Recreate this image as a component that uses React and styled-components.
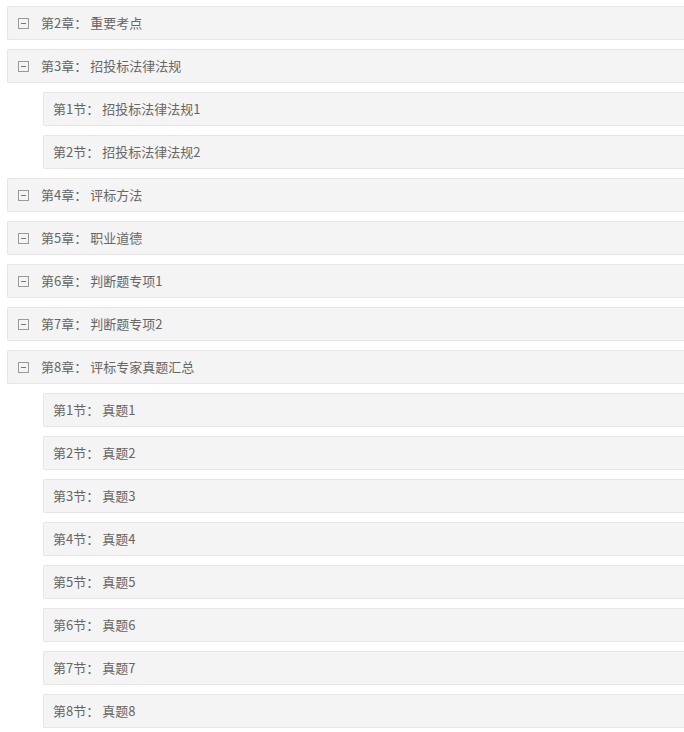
import React from "react"
import styled, { createGlobalStyle } from "styled-components"

const Global = createGlobalStyle`
  html, body {
    margin: 0;
    padding: 0;
    background: #fff;
  }
  body {
    font-family: "Microsoft YaHei", "Noto Sans CJK SC", "Noto Sans", sans-serif;
  }
`

const List = styled.div`
  display: flex;
  flex-direction: column;
  gap: 9px;
  padding: 6px 0 0 7px;
`

const Row = styled.div`
  display: flex;
  align-items: center;
  height: 32px;
  box-sizing: border-box;
  height: 34px;
  margin-left: ${props => (props.sub ? "36px" : "0")};
  padding: 0 0 2px ${props => (props.sub ? "9px" : "10px")};
  background: #f4f4f4;
  border: 1px solid #e6e6e6;
  border-right: none;
  border-radius: 2px 0 0 2px;
  color: #666;
  font-size: 13px;
  line-height: 1;
  white-space: pre;
`

const Toggle = styled.span`
  display: inline-flex;
  align-items: center;
  justify-content: center;
  width: 9px;
  height: 9px;
  margin-top: 2px;
  border: 1px solid #999;
  margin-right: 12px;
  &::after {
    content: "";
    width: 5px;
    height: 1px;
    background: #777;
  }
`

const data = [
  { label: "第2章：", title: "重要考点" },
  { label: "第3章：", title: "招投标法律法规" },
  { label: "第1节：", title: "招投标法律法规1", sub: true },
  { label: "第2节：", title: "招投标法律法规2", sub: true },
  { label: "第4章：", title: "评标方法" },
  { label: "第5章：", title: "职业道德" },
  { label: "第6章：", title: "判断题专项1" },
  { label: "第7章：", title: "判断题专项2" },
  { label: "第8章：", title: "评标专家真题汇总" },
  ...[1, 2, 3, 4, 5, 6, 7, 8].map(n => ({
    label: `第${n}节：`,
    title: `真题${n}`,
    sub: true,
  })),
]

const App = () => (
  <>
    <Global />
    <List>
      {data.map((item, i) => (
        <Row key={i} sub={item.sub}>
          {!item.sub && <Toggle />}
          {item.label + " " + item.title}
        </Row>
      ))}
    </List>
  </>
)

export default App
